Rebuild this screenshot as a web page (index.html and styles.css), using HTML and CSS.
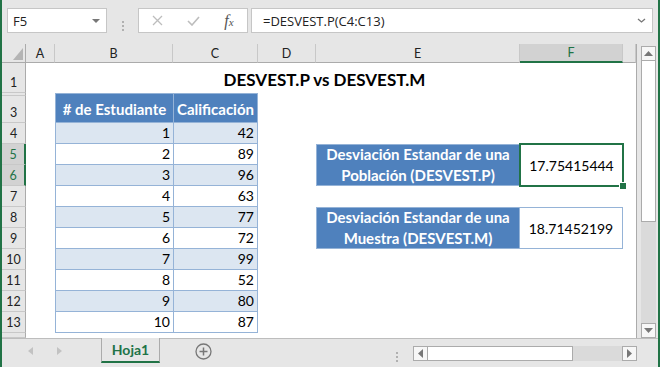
FILE: index.html
```html
<!DOCTYPE html>
<html lang="es">
  <head>
    <meta charset="UTF-8" />
    <title>DESVEST.P vs DESVEST.M</title>
    <link rel="stylesheet" href="styles.css">
  </head>
  <body>
    <div class="excel">
      <div class="formula-bar">
        <div class="name-box">
          <span>F5</span>
          <svg width="8" height="4" viewBox="0 0 8 4"><path d="M0 0h8L4 4z" fill="#777"/></svg>
        </div>
        <div class="grip"><i></i><i></i><i></i></div>
        <div class="fx-box">
          <svg width="11" height="11" viewBox="0 0 11 11"><path d="M1 1l9 9M10 1l-9 9" stroke="#bdbdbd" stroke-width="1.3"/></svg>
          <svg width="13" height="10" viewBox="0 0 13 10"><path d="M1 5l4 4 7-8" fill="none" stroke="#bdbdbd" stroke-width="1.6"/></svg>
          <span class="fx">f<sub>x</sub></span>
        </div>
        <div class="formula">
          <span>=DESVEST.P(C4:C13)</span>
          <svg width="9" height="5" viewBox="0 0 9 5"><path d="M1 1l3.5 3 3.5-3" fill="none" stroke="#777" stroke-width="1.3"/></svg>
        </div>
      </div>

      <div class="workspace">
        <div class="sheet">
          <div class="corner"><svg width="10" height="12" viewBox="0 0 10 12"><path d="M10 0v12H0z" fill="#b4b4b4"/></svg></div>
          <div class="col-h">A</div>
          <div class="col-h">B</div>
          <div class="col-h">C</div>
          <div class="col-h">D</div>
          <div class="col-h">E</div>
          <div class="col-h selected">F</div>
          <div class="col-h"></div>

          <div class="row-h">1</div>
          <div class="row-h hidden"></div>
          <div class="row-h">3</div>
          <div class="row-h">4</div>
          <div class="row-h selected">5</div>
          <div class="row-h selected">6</div>
          <div class="row-h">7</div>
          <div class="row-h">8</div>
          <div class="row-h">9</div>
          <div class="row-h">10</div>
          <div class="row-h">11</div>
          <div class="row-h">12</div>
          <div class="row-h">13</div>
          <div class="row-h"></div>

          <div class="title">DESVEST.P vs DESVEST.M</div>

          <div class="scores">
            <div class="th"># de Estudiante</div><div class="th">Calificación</div>
            <div class="td">1</div><div class="td">42</div>
            <div class="td">2</div><div class="td">89</div>
            <div class="td">3</div><div class="td">96</div>
            <div class="td">4</div><div class="td">63</div>
            <div class="td">5</div><div class="td">77</div>
            <div class="td">6</div><div class="td">72</div>
            <div class="td">7</div><div class="td">99</div>
            <div class="td">8</div><div class="td">52</div>
            <div class="td">9</div><div class="td">80</div>
            <div class="td">10</div><div class="td">87</div>
          </div>

          <div class="stat-label pop">Desviación Estandar de una<br>Población (DESVEST.P)</div>
          <div class="stat-value pop active">17.75415444</div>
          <div class="stat-label sample">Desviación Estandar de una<br>Muestra (DESVEST.M)</div>
          <div class="stat-value sample">18.71452199</div>
        </div>

        <div class="vscroll">
          <div class="sb-btn"><svg width="9" height="5" viewBox="0 0 9 5"><path d="M0 5h9L4.5 0z" fill="#777"/></svg></div>
          <div class="sb-thumb"></div>
          <div class="sb-track"></div>
          <div class="sb-btn"><svg width="9" height="5" viewBox="0 0 9 5"><path d="M0 0h9L4.5 5z" fill="#777"/></svg></div>
        </div>
      </div>

      <div class="tabbar">
        <div class="tab-nav">
          <svg width="5" height="8" viewBox="0 0 5 8"><path d="M5 0v8L0 4z" fill="#c2c2c2"/></svg>
          <svg width="5" height="8" viewBox="0 0 5 8"><path d="M0 0v8l5-4z" fill="#c2c2c2"/></svg>
        </div>
        <div class="tab">Hoja1</div>
        <svg class="add-sheet" width="17" height="17" viewBox="0 0 17 17">
          <circle cx="8.5" cy="8.5" r="7.5" fill="none" stroke="#777" stroke-width="1.3"/>
          <path d="M8.5 4.5v8M4.5 8.5h8" stroke="#777" stroke-width="1.5"/>
        </svg>
        <div class="spacer"></div>
        <div class="grip tab-grip"><i></i><i></i><i></i></div>
        <div class="hscroll">
          <div class="sb-btn"><svg width="5" height="9" viewBox="0 0 5 9"><path d="M5 0v9L0 4.5z" fill="#777"/></svg></div>
          <div class="sb-thumb"></div>
          <div class="sb-track"></div>
          <div class="sb-btn"><svg width="5" height="9" viewBox="0 0 5 9"><path d="M0 0v9l5-4.5z" fill="#777"/></svg></div>
        </div>
      </div>
    </div>
  </body>
</html>
```

FILE: styles.css
```css
* {
  box-sizing: border-box;
}

body {
  margin: 0;
  background: #e6e6e6;
  font-family: Lato, "Liberation Sans", sans-serif;
  color: #000;
}

.excel {
  width: 660px;
  height: 367px;
  display: flex;
  flex-direction: column;
  border-left: 2px solid #217346;
  border-right: 2px solid #217346;
  background: #e6e6e6;
  overflow: hidden;
}

/* formula bar */
.formula-bar {
  height: 44px;
  flex: none;
  display: flex;
  align-items: flex-start;
  padding: 8px 5px 0 5px;
  font-family: "Open Sans", "Noto Sans", sans-serif;
  font-size: 13px;
  color: #222;
}

.name-box,
.fx-box,
.formula {
  height: 25px;
  background: #fff;
  border: 1px solid #c6c6c6;
  display: flex;
  align-items: center;
}

.name-box {
  width: 100px;
  justify-content: space-between;
  padding: 0 6px 0 5px;
}

.grip {
  width: 31px;
  align-self: center;
  display: flex;
  flex-direction: column;
  align-items: center;
  gap: 2px;
}

.grip i {
  width: 2px;
  height: 2px;
  background: #b0b0b0;
}

.fx-box {
  width: 110px;
  display: grid;
  grid-template-columns: repeat(3, 36px);
  justify-items: center;
  align-items: center;
}

.fx {
  font-family: "Liberation Serif", serif;
  font-style: italic;
  font-size: 16px;
  color: #555;
}

.fx sub {
  font-size: 11px;
  vertical-align: 0;
}

.formula {
  flex: 1;
  margin-left: 3px;
  padding: 0 6px 0 11px;
  justify-content: space-between;
}

/* sheet */
.workspace {
  flex: 1;
  display: flex;
  min-height: 0;
}

.sheet {
  width: 635px;
  background: #fff;
  border-right: 1px solid #ababab;
  display: grid;
  grid-template-columns: 24px 29px 118px 85px 58px 204px 103px 1fr;
  grid-template-rows: 19px 30px 3px 27px repeat(10, 21px) 1fr;
}

.corner {
  background: #e6e6e6;
  border-right: 1px solid #ababab;
  border-bottom: 1px solid #ababab;
  display: flex;
  align-items: flex-end;
  justify-content: flex-end;
  padding: 0 2px 2px 0;
}

.corner svg {
  display: block;
}

.col-h,
.row-h {
  background: #e6e6e6;
  font-size: 12.5px;
  color: #222;
  display: flex;
  justify-content: center;
}

.col-h {
  align-items: center;
  border-right: 1px solid #c8c8c8;
  border-bottom: 1px solid #ababab;
}

.col-h.selected {
  background: #d2d2d2;
  color: #217346;
  border-bottom: 2px solid #217346;
}

.row-h {
  grid-column: 1;
  align-items: flex-end;
  padding-bottom: 2px;
  border-right: 1px solid #ababab;
  border-bottom: 1px solid #c8c8c8;
}

.row-h.selected {
  background: #d2d2d2;
  color: #217346;
  border-right: 2px solid #217346;
}

.title {
  grid-row: 2;
  grid-column: 2 / 8;
  align-self: end;
  text-align: center;
  font-size: 17px;
  font-weight: 700;
  padding-bottom: 3px;
}

/* student table */
.scores {
  grid-row: 3 / 15;
  grid-column: 3 / 5;
  display: grid;
  grid-template-columns: 117px 1fr;
  grid-template-rows: 28px repeat(10, 20px);
  gap: 1px;
  padding: 1px;
  background: #95b3d7;
}

.th {
  background: #4f81bd;
  color: #fff;
  font-size: 15px;
  font-weight: 700;
  display: flex;
  align-items: center;
  justify-content: center;
  padding-top: 2px;
}

.td {
  background: #fff;
  font-size: 14px;
  line-height: 20px;
  text-align: right;
  padding-right: 3px;
}

.td:nth-child(4n+3),
.td:nth-child(4n+4) {
  background: #dce6f1;
}

/* results */
.pop {
  grid-row: 6 / 8;
}

.sample {
  grid-row: 9 / 11;
}

.stat-label {
  grid-column: 6;
  background: #4f81bd;
  border: 1px solid #95b3d7;
  color: #fff;
  font-size: 15px;
  font-weight: 700;
  line-height: 21px;
  text-align: center;
  display: flex;
  align-items: center;
  justify-content: center;
}

.stat-value {
  grid-column: 7;
  border: 1px solid #95b3d7;
  border-left: 0;
  font-size: 14px;
  display: flex;
  align-items: center;
  justify-content: center;
}

.stat-value.active {
  position: relative;
  border: 0;
  outline: 2px solid #217346;
  outline-offset: -1px;
}

.stat-value.active::after {
  content: "";
  position: absolute;
  right: -4px;
  bottom: -4px;
  width: 6px;
  height: 6px;
  background: #217346;
  border: 1px solid #fff;
}

/* scroll bars */
.vscroll {
  flex: 1;
  display: flex;
  flex-direction: column;
  padding: 2px 2px 0 4px;
}

.sb-btn {
  flex: none;
  width: 15px;
  height: 15px;
  background: #f7f7f7;
  border: 1px solid #ababab;
  display: flex;
  align-items: center;
  justify-content: center;
}

.vscroll .sb-thumb {
  height: 161px;
  background: #fff;
  border: 1px solid #ababab;
  border-top: 0;
}

.sb-track {
  flex: 1;
  background: #dadada;
}

/* sheet tabs */
.tabbar {
  height: 29px;
  flex: none;
  display: flex;
  align-items: flex-start;
  border-top: 1px solid #bdbdbd;
}

.tab-nav {
  width: 99px;
  height: 24px;
  display: flex;
  align-items: center;
  gap: 24px;
  padding-left: 26px;
}

.tab {
  width: 59px;
  height: 25px;
  margin-top: -1px;
  background: #e6e6e6;
  border: 1px solid #ababab;
  border-top: 0;
  border-bottom: 2px solid #217346;
  color: #217346;
  font-size: 14px;
  font-weight: 700;
  display: flex;
  align-items: center;
  justify-content: center;
}

.add-sheet {
  margin: 4px 0 0 35px;
}

.spacer {
  flex: 1;
}

.tab-grip {
  width: auto;
  margin: 7px 15px 0 0;
}

.hscroll {
  width: 224px;
  height: 15px;
  margin: 7px 21px 0 0;
  display: flex;
}

.hscroll .sb-btn {
  height: 15px;
}

.hscroll .sb-thumb {
  width: 145px;
  background: #fff;
  border: 1px solid #ababab;
  border-left: 0;
}
```
